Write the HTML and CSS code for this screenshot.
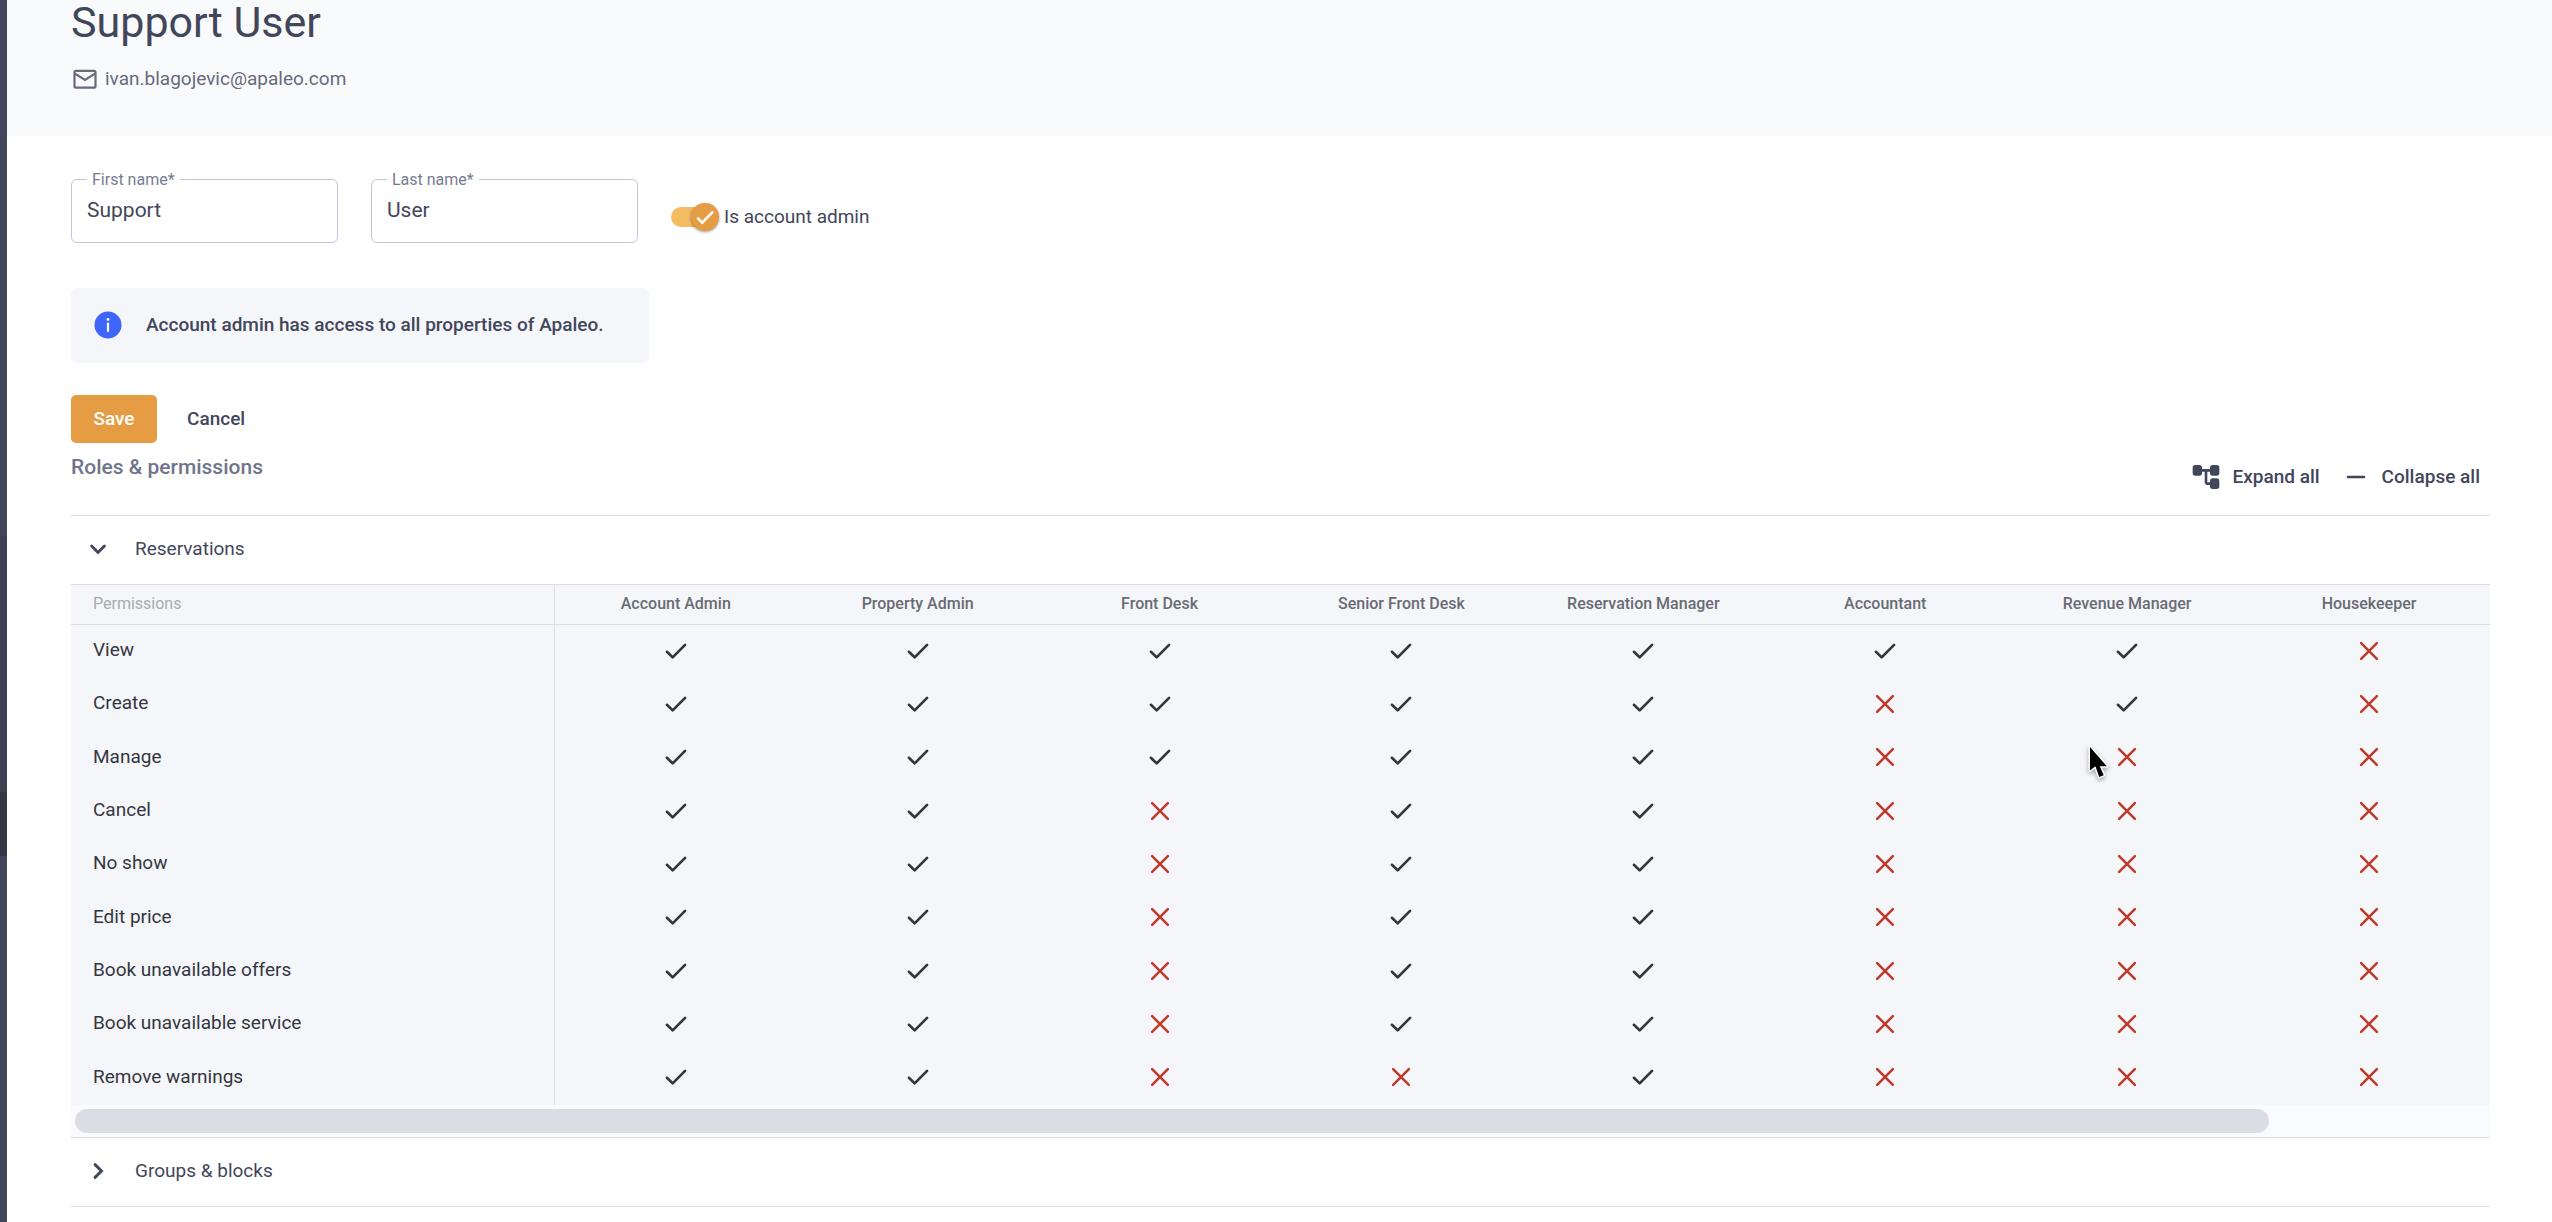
FILE: index.html
```html
<!DOCTYPE html>
<html lang="en">
<head>
  <meta charset="UTF-8">
  <meta name="viewport" content="width=device-width, initial-scale=1.0">
  <title>Support User</title>
  <link rel="stylesheet" href="styles.css">
</head>
<body>
  <!-- icons used more than once -->
  <svg class="sprite" aria-hidden="true">
    <symbol id="icon-check" viewBox="0 0 24 24">
      <path d="M5.2 12.6l4.3 4.2 9.3-9.4" fill="none" stroke="currentColor" stroke-width="2" stroke-linecap="round" stroke-linejoin="round"/>
    </symbol>
    <symbol id="icon-close" viewBox="0 0 24 24">
      <path d="M6.1 6.1l11.8 11.8M17.9 6.1L6.1 17.9" fill="none" stroke="currentColor" stroke-width="1.9" stroke-linecap="round"/>
    </symbol>
    <symbol id="icon-chevron" viewBox="0 0 24 24">
      <path d="M7.2 9.8l4.8 4.8 4.8-4.8" fill="none" stroke="currentColor" stroke-width="2.2" stroke-linecap="round" stroke-linejoin="miter"/>
    </symbol>
  </svg>

  <aside class="sidebar">
    <div class="sidebar-top"></div>
    <div class="sidebar-group"></div>
    <div class="sidebar-active"></div>
  </aside>

  <div class="page">
    <header class="page-header">
      <h1>Support User</h1>
      <div class="email">
        <svg class="icon-mail" viewBox="0 0 24 24" aria-hidden="true">
          <rect x="3" y="5" width="18" height="14.4" rx="1.2" fill="none" stroke="currentColor" stroke-width="1.9"/>
          <path d="M3.4 7.4L12 12.9l8.6-5.5" fill="none" stroke="currentColor" stroke-width="1.9"/>
        </svg>
        <span>ivan.blagojevic@apaleo.com</span>
      </div>
    </header>

    <main class="content">
      <form>
        <div class="form-row">
          <div class="field">
            <label for="firstName">First name*</label>
            <input type="text" id="firstName" value="Support">
          </div>
          <div class="field">
            <label for="lastName">Last name*</label>
            <input type="text" id="lastName" value="User">
          </div>
          <div class="toggle">
            <span class="toggle-switch">
              <input type="checkbox" id="isAdmin" checked>
              <span class="toggle-thumb">
                <svg viewBox="0 0 24 24" aria-hidden="true"><path d="M3.6 12.8l5.4 5.4L20.800 6.200" fill="none" stroke="currentColor" stroke-width="2.8"/></svg>
              </span>
            </span>
            <label for="isAdmin">Is account admin</label>
          </div>
        </div>

        <div class="alert">
          <svg class="icon-info" viewBox="0 0 24 24" aria-hidden="true">
            <circle cx="12" cy="12" r="11.6" fill="#3f66fb"/>
            <circle cx="12" cy="7.3" r="1.2" fill="#fff"/>
            <path d="M12 10.8v6.4" stroke="#fff" stroke-width="1.9" stroke-linecap="round"/>
          </svg>
          <span>Account admin has access to all properties of Apaleo.</span>
        </div>

        <div class="form-actions">
          <button type="button" class="btn btn-primary">Save</button>
          <button type="button" class="btn">Cancel</button>
        </div>
      </form>

      <section>
        <div class="section-header">
          <h2>Roles &amp; permissions</h2>
          <div class="section-actions">
            <button type="button" class="btn-icon">
              <svg class="icon" viewBox="0 0 24 24" aria-hidden="true">
                <g fill="currentColor">
                  <rect x="2" y="3" width="7" height="8" rx="2"/>
                  <rect x="15" y="3" width="7" height="8" rx="2"/>
                  <rect x="15" y="13" width="7" height="8" rx="2"/>
                </g>
                <path d="M8 7h8M12 7v8.5a1.5 1.5 0 0 0 1.5 1.5H16" fill="none" stroke="currentColor" stroke-width="2"/>
              </svg>
              Expand all
            </button>
            <button type="button" class="btn-icon">
              <svg class="icon" viewBox="0 0 24 24" aria-hidden="true">
                <path d="M6 12h12" stroke="currentColor" stroke-width="2" stroke-linecap="round"/>
              </svg>
              Collapse all
            </button>
          </div>
        </div>

        <div class="panel">
          <button type="button" class="panel-header" aria-expanded="true">
            <svg class="icon"><use href="#icon-chevron"/></svg>
            Reservations
          </button>
          <table class="permissions">
            <thead>
              <tr>
                <th>Permissions</th>
                <th>Account Admin</th>
                <th>Property Admin</th>
                <th>Front Desk</th>
                <th>Senior Front Desk</th>
                <th>Reservation Manager</th>
                <th>Accountant</th>
                <th>Revenue Manager</th>
                <th>Housekeeper</th>
              </tr>
            </thead>
            <tbody id="permissionRows"></tbody>
          </table>
          <div class="scroll-track"><div class="scroll-thumb"></div></div>
        </div>

        <div class="panel">
          <button type="button" class="panel-header" aria-expanded="false">
            <svg class="icon icon-collapsed"><use href="#icon-chevron"/></svg>
            Groups &amp; blocks
          </button>
        </div>
      </section>
    </main>
  </div>

  <svg class="cursor" viewBox="0 0 32 44" aria-hidden="true">
    <path d="M10 7v23.600l5.400-4.400L19.200 37l4.500-1.800-3.900-9h7z" fill="#000" stroke="#fff" stroke-width="3" stroke-linejoin="round" paint-order="stroke"/>
  </svg>

  <script>
    // one flag per role, in the order of the table head
    const permissions = [
      ['View', '11111110'],
      ['Create', '11111010'],
      ['Manage', '11111000'],
      ['Cancel', '11011000'],
      ['No show', '11011000'],
      ['Edit price', '11011000'],
      ['Book unavailable offers', '11011000'],
      ['Book unavailable service', '11011000'],
      ['Remove warnings', '11001000']
    ];

    function cell(flag) {
      const name = flag === '1' ? 'check' : 'close';
      return `<td><svg class="icon icon-${name}"><use href="#icon-${name}"/></svg></td>`;
    }

    document.getElementById('permissionRows').innerHTML = permissions
      .map(([name, flags]) => `<tr><th>${name}</th>${[...flags].map(cell).join('')}</tr>`)
      .join('');
  </script>
</body>
</html>
```
FILE: styles.css
```css
* {
  box-sizing: border-box;
}
body {
  margin: 0;
  display: flex;
  min-height: 100vh;
  font-family: Roboto, sans-serif;
  font-size: 19px;
  line-height: 24px;
  color: #42465a;
  background: #fff;
}
button,
input {
  font: inherit;
  color: inherit;
}
.sprite {
  position: absolute;
  width: 0;
  height: 0;
}
.icon {
  width: 32px;
  height: 32px;
  display: block;
  flex: none;
}

/* Sidebar */
.sidebar {
  width: 7px;
  flex: none;
  background: #42465a;
}
.sidebar-top {
  height: 536px;
}
.sidebar-group {
  height: 256px;
  background: #3c4050;
}
.sidebar-active {
  height: 64px;
  background: #353746;
}

/* Header */
.page {
  flex: 1;
  min-width: 0;
}
.page-header {
  padding: 0 62px 43px 64px;
  background: #f9fafc;
}
h1 {
  margin: 0 0 21px;
  font-size: 43px;
  line-height: 44px;
  font-weight: 400;
}
.email {
  display: flex;
  align-items: center;
  gap: 6px;
  color: #666a7b;
}
.icon-mail {
  width: 28px;
  height: 28px;
}

/* Form */
.content {
  padding: 43px 62px 0 64px;
}
.form-row {
  display: flex;
  gap: 33px;
  margin-bottom: 45px;
}
.field {
  position: relative;
  width: 267px;
}
.field label {
  position: absolute;
  top: -11px;
  left: 16px;
  padding: 0 5px;
  font-size: 16px;
  color: #777c93;
  background: #fff;
}
.field input {
  display: block;
  width: 100%;
  height: 64px;
  padding: 0 15px 2px;
  border: 1px solid #c2c5d9;
  border-radius: 6px;
  font-size: 21px;
  background: none;
}
.toggle {
  display: flex;
  align-items: center;
  gap: 5px;
  padding-top: 12px;
}
.toggle-switch {
  position: relative;
  width: 48px;
  height: 28px;
  display: flex;
  align-items: center;
}
.toggle-switch input {
  appearance: none;
  width: 42px;
  height: 20px;
  margin: 0;
  border-radius: 10px;
  background: #f4bb63;
}
.toggle-thumb {
  position: absolute;
  right: 0;
  top: 0;
  width: 28px;
  height: 28px;
  padding: 3px;
  border-radius: 50%;
  color: #fff;
  background: #e59c42;
  box-shadow: 0 1px 3px rgba(0, 0, 0, 0.4);
  pointer-events: none;
}
.toggle-thumb svg {
  display: block;
}
.alert {
  display: flex;
  align-items: center;
  gap: 24px;
  max-width: 578px;
  height: 75px;
  padding: 0 23px 2px;
  margin-bottom: 32px;
  border-radius: 6px;
  font-weight: 500;
  background: #f5f6fa;
}
.icon-info {
  width: 28px;
  height: 28px;
}
.form-actions {
  display: flex;
  gap: 8px;
}
.btn {
  min-width: 86px;
  height: 48px;
  padding: 0 22px;
  border: none;
  border-radius: 5px;
  font-weight: 500;
  background: none;
  cursor: pointer;
}
.btn-primary {
  color: #fff;
  background: #e59c42;
}

/* Roles & permissions */
.section-header {
  display: flex;
  justify-content: space-between;
  align-items: flex-start;
  padding: 10px 0 14px;
}
h2 {
  margin: 0;
  font-size: 21px;
  line-height: 28px;
  font-weight: 500;
  color: #6f758b;
}
.section-actions {
  display: flex;
}
.btn-icon {
  display: flex;
  align-items: center;
  gap: 10px;
  height: 48px;
  padding: 0 10px;
  border: none;
  font-weight: 500;
  background: none;
  cursor: pointer;
}
.panel {
  border-top: 1px solid #dcdde4;
}
.panel:last-child {
  border-bottom: 1px solid #dcdde0;
}
.panel-header {
  display: flex;
  align-items: center;
  gap: 21px;
  width: 100%;
  height: 68px;
  padding: 0 11px 2px;
  border: none;
  background: none;
  cursor: pointer;
}
.icon-collapsed {
  transform: rotate(-90deg);
}

.permissions {
  width: 100%;
  height: 521px;
  table-layout: fixed;
  border-collapse: separate;
  border-spacing: 0;
  border-top: 1px solid #dcdde0;
  background: #f5f6fa;
}
.permissions th,
.permissions td {
  width: 10%;
  padding: 0 0 2px;
  font-weight: 400;
  color: #34363f;
}
.permissions th:first-child {
  width: 20%;
  padding: 0 22px 3px;
  border-right: 1px solid #dcdde0;
  text-align: left;
}
.permissions thead th {
  height: 40px;
  border-bottom: 1px solid #dcdde0;
  font-size: 16px;
  font-weight: 500;
  color: #696b73;
}
.permissions thead th:first-child {
  padding-bottom: 2px;
  font-weight: 400;
  color: #a9aab0;
}
.permissions .icon {
  margin: 0 auto;
}
.permissions .icon-close {
  color: #bb3b2c;
}
.scroll-track {
  padding: 4px;
  background: #fafbff;
}
.scroll-thumb {
  width: 91%;
  height: 24px;
  border-radius: 12px;
  background: #dbdce4;
}

.cursor {
  position: absolute;
  top: 740px;
  left: 2080px;
  width: 32px;
  height: 44px;
  filter: drop-shadow(0 2px 2px rgba(0, 0, 0, 0.35));
}
```
